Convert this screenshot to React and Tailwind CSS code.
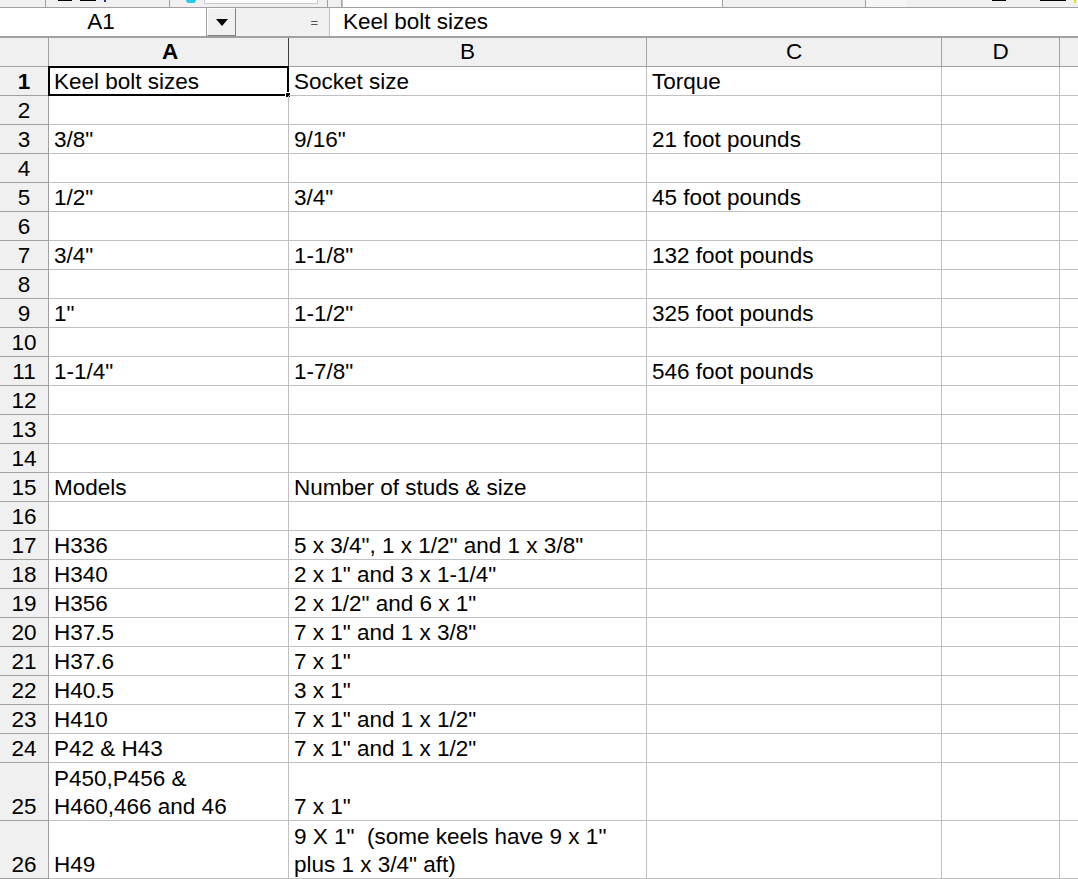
import React from 'react';

const font = { fontFamily: '"Liberation Sans", Arial, sans-serif' };

const rows = [
  { n: 1, a: 'Keel bolt sizes', b: 'Socket size', c: 'Torque' },
  { n: 2 },
  { n: 3, a: '3/8"', b: '9/16"', c: '21 foot pounds' },
  { n: 4 },
  { n: 5, a: '1/2"', b: '3/4"', c: '45 foot pounds' },
  { n: 6 },
  { n: 7, a: '3/4"', b: '1-1/8"', c: '132 foot pounds' },
  { n: 8 },
  { n: 9, a: '1"', b: '1-1/2"', c: '325 foot pounds' },
  { n: 10 },
  { n: 11, a: '1-1/4"', b: '1-7/8"', c: '546 foot pounds' },
  { n: 12 },
  { n: 13 },
  { n: 14 },
  { n: 15, a: 'Models', b: 'Number of studs & size' },
  { n: 16 },
  { n: 17, a: 'H336', b: '5 x 3/4", 1 x 1/2" and 1 x 3/8"' },
  { n: 18, a: 'H340', b: '2 x 1" and 3 x 1-1/4"' },
  { n: 19, a: 'H356', b: '2 x 1/2" and 6 x 1"' },
  { n: 20, a: 'H37.5', b: '7 x 1" and 1 x 3/8"' },
  { n: 21, a: 'H37.6', b: '7 x 1"' },
  { n: 22, a: 'H40.5', b: '3 x 1"' },
  { n: 23, a: 'H410', b: '7 x 1" and 1 x 1/2"' },
  { n: 24, a: 'P42 & H43', b: '7 x 1" and 1 x 1/2"' },
  { n: 25, a: 'P450,P456 &\nH460,466 and 46', b: '7 x 1"', tall: true },
  { n: 26, a: 'H49', b: '9 X 1"  (some keels have 9 x 1"\nplus 1 x 3/4" aft)', tall: true },
];

const Cell = ({ children, active }) => (
  <div className="relative flex items-end overflow-visible whitespace-pre border-r border-b border-[#c0c0c0] pl-[5px] leading-[28px]">
    <span className="relative top-[1px]">{children}</span>
    {active && (
      <div className="pointer-events-none absolute -left-[1px] -top-[1px] -right-[1px] -bottom-[1px] border-2 border-black">
        <div className="absolute -bottom-[4px] -right-[4px] h-[6px] w-[6px] border border-white bg-black" />
      </div>
    )}
  </div>
);

const App = () => {
  return (
    <div className="w-[1078px] h-[879px] overflow-hidden bg-white text-[22.5px] text-black" style={font}>
      {/* toolbar remnant */}
      <div className="flex h-[8px] border-b border-[#a0a0a0] bg-[#f0f0f0]">
        <div className="w-[46px] border-r border-[#a0a0a0]" />
        <div className="flex w-[124px] gap-[8px] border-r border-[#a0a0a0] pl-[12px]">
          <div className="h-[1px] w-[14px] bg-black" />
          <div className="h-[1px] w-[16px] bg-black" />
          <div className="h-[2px] w-[2px] bg-[#1c2fa0]" />
        </div>
        <div className="flex w-[158px] items-start border-r border-[#a0a0a0] pl-[16px]">
          <div className="h-[3px] w-[10px] rounded-b-full bg-[#28c8e8]" />
          <div className="ml-[8px] h-[4px] w-[114px] border-x border-b border-[#c8c8c8] bg-white" />
        </div>
        <div className="w-[14px] border-r border-[#a0a0a0]" />
        <div className="w-[380px] border-l border-[#c8c8c8] bg-white" />
        <div className="w-[14px] border-l border-[#a0a0a0]" />
        <div className="w-[130px] border-r border-[#a0a0a0]" />
        <div className="w-[40px] bg-[#f6f6f6]" />
        <div className="flex w-[100px] gap-[18px] pl-[86px]">
          <div className="h-[1px] w-[30px] bg-black" />
        </div>
        <div className="ml-auto flex gap-[8px] pr-[2px]">
          <div className="h-[1px] w-[26px] bg-black" />
          <div className="h-[3px] w-[2px] bg-[#f0e000]" />
        </div>
      </div>

      {/* formula bar */}
      <div className="flex h-[30px] border-b-2 border-[#a0a0a0]">
        <div className="flex w-[207px] items-center justify-center border-r border-[#a0a0a0] bg-white pr-[4px] leading-none">A1</div>
        <div className="flex w-[29px] items-center justify-center border border-t-white border-l-white border-b-[#808080] border-r-[#808080] bg-[#f0f0f0]">
          <svg width="12" height="7" viewBox="0 0 12 7"><path d="M0 0h12L6 7z" fill="#000" /></svg>
        </div>
        <div className="flex w-[94px] items-center justify-end border-r border-[#c0c0c0] bg-[#f0f0f0] pr-[11px] text-[13px] leading-none text-[#505050]">=</div>
        <div className="flex flex-1 items-center bg-white pl-[13px] leading-none">Keel bolt sizes</div>
      </div>

      {/* column headers */}
      <div className="grid h-[29px] grid-cols-[49px_240px_358px_295px_118px_1fr] bg-[#f0f0f0] leading-none">
        <div className="border-r border-b border-[#a0a0a0]" />
        <div className="flex items-center justify-center border-r border-b border-[#a0a0a0] border-r-[#404040] pl-[3px] font-bold">A</div>
        <div className="flex items-center justify-center border-r border-b border-[#a0a0a0]">B</div>
        <div className="flex items-center justify-center border-r border-b border-[#a0a0a0]">C</div>
        <div className="flex items-center justify-center border-r border-b border-[#a0a0a0]">D</div>
        <div className="border-b border-[#a0a0a0]" />
      </div>

      {/* rows */}
      {rows.map((r) => (
        <div
          key={r.n}
          className={`grid grid-cols-[49px_240px_358px_295px_118px_1fr] ${r.tall ? 'h-[58px]' : 'h-[29px]'}`}
        >
          <div className={`flex items-end justify-center border-r border-b border-[#a0a0a0] bg-[#f0f0f0] leading-[28px] ${r.n === 1 ? 'font-bold' : ''}`}>
            <span className="relative top-[1px]">{r.n}</span>
          </div>
          <Cell active={r.n === 1}>{r.a}</Cell>
          <Cell>{r.b}</Cell>
          <Cell>{r.c}</Cell>
          <Cell />
          <div className="border-b border-[#c0c0c0]" />
        </div>
      ))}
    </div>
  );
};

export default App;
